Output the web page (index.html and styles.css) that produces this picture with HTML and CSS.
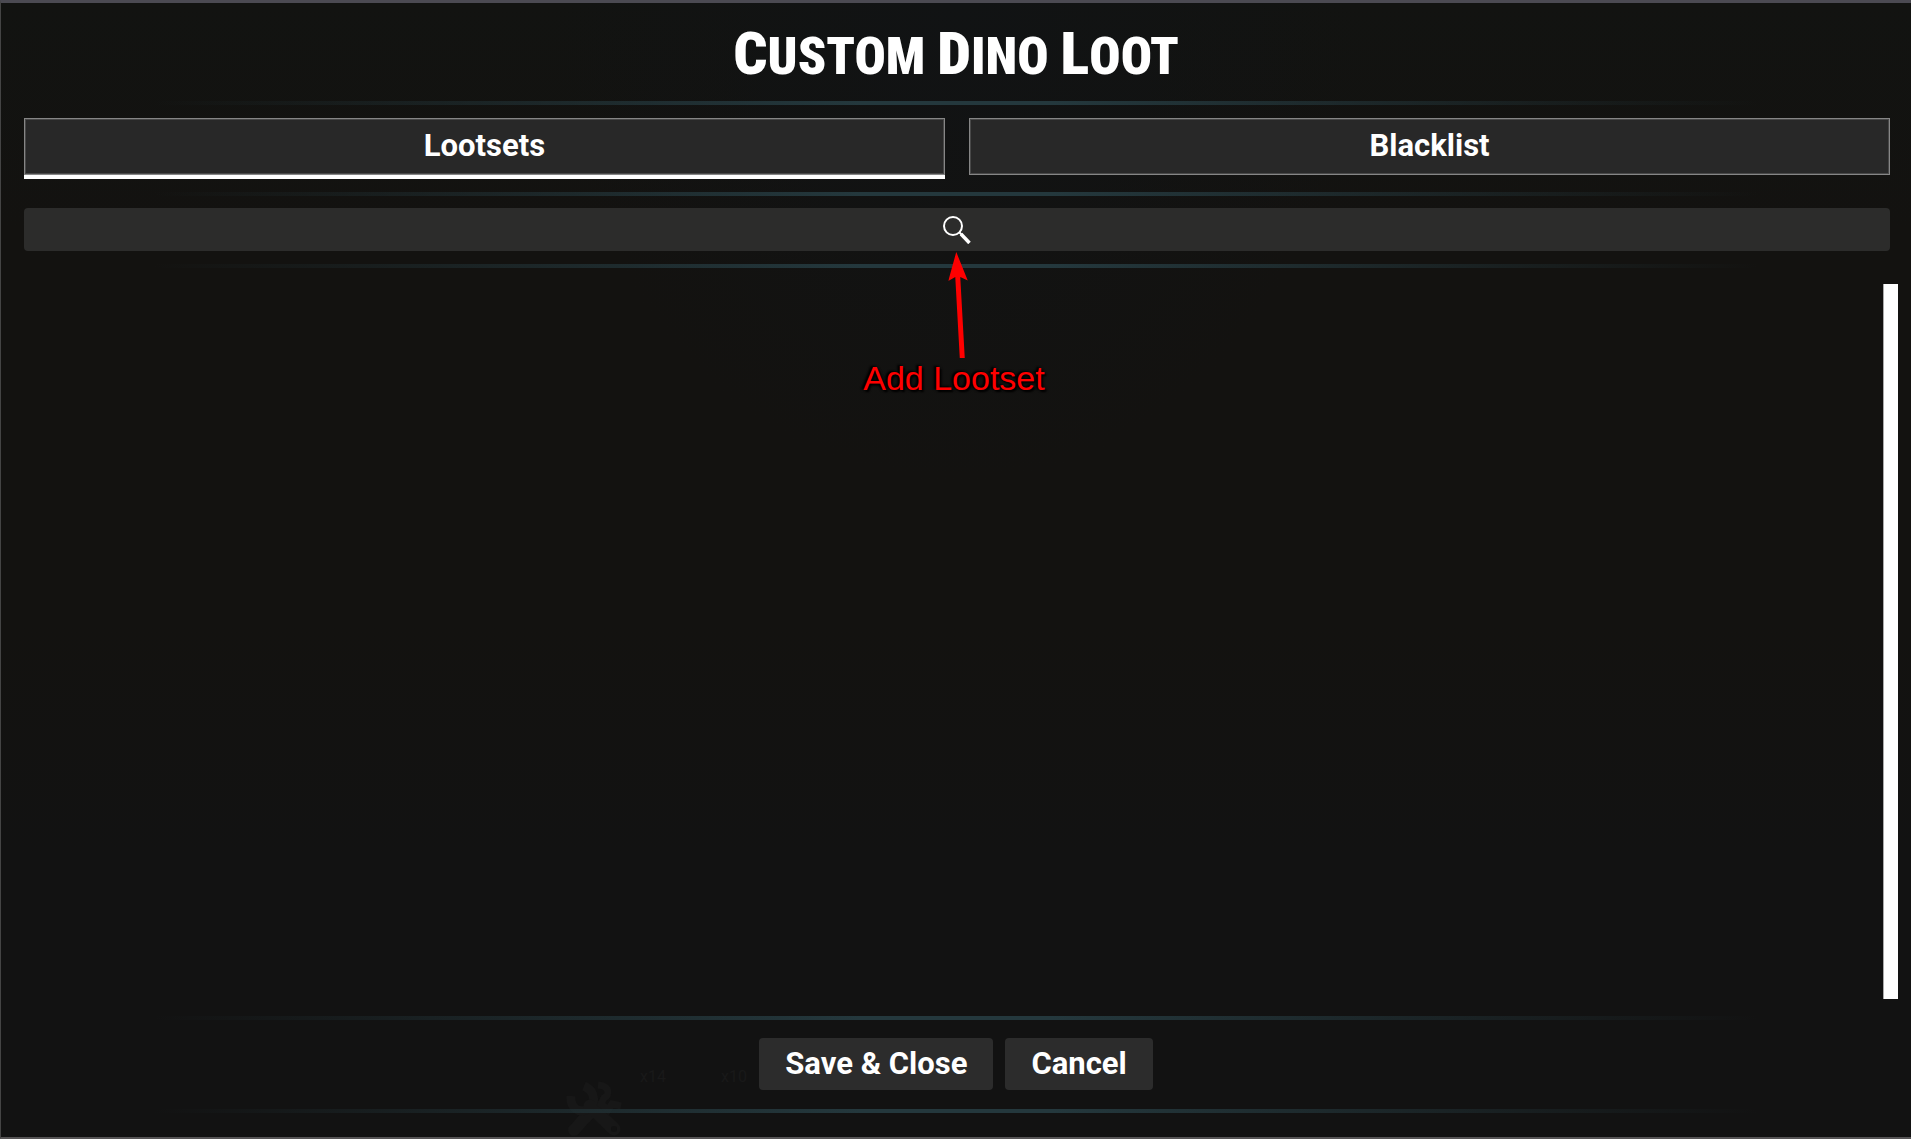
FILE: index.html
```
<!DOCTYPE html>
<html lang="en">
<head>
    <meta charset="UTF-8">
    <meta name="viewport" content="width=device-width, initial-scale=1.0">
    <title>Custom Dino Loot</title>
    <link rel="stylesheet" href="styles.css">
</head>

<body>

    <main class="window">
        <!-- Game HUD showing faintly through the window -->
        <div class="hud" aria-hidden="true">
            <svg class="hud-tools" width="58" height="56" viewBox="0 0 58 56" fill="none" stroke="#171717">
                <path d="M8 49L30 25" stroke-width="12" stroke-linecap="round"/>
                <path d="M5 15C4 27 13 33 22 28C30 24 30 10 18 5" stroke-width="9"/>
                <path d="M24 25L48 48" stroke-width="13" stroke-linecap="round"/>
                <circle cx="48" cy="48" r="3" fill="#121212" stroke="none"/>
                <path d="M32 4C44 5 44 14 38 17L35 23L42 29L46 23L55 25" stroke-width="7"/>
            </svg>
            <span class="hud-count">x14</span>
            <span class="hud-count">x10</span>
        </div>

        <h1><span class="cap">C</span>ustom <span class="cap">D</span>ino <span class="cap">L</span>oot</h1>
        <div class="divider"></div>

        <!-- Tabs -->
        <nav class="tabs">
            <button class="tab active" type="button">Lootsets</button>
            <button class="tab" type="button">Blacklist</button>
        </nav>
        <div class="divider"></div>

        <!-- Add lootset -->
        <div class="search-row">
            <button class="search-button" type="button" aria-label="Add Lootset">
                <svg class="search-icon" width="28" height="28" viewBox="0 0 28 28" aria-hidden="true">
                    <circle cx="10" cy="10" r="9" fill="none" stroke="#fff" stroke-width="2"/>
                    <path d="M16 16L19 19" stroke="#fff" stroke-width="2"/>
                    <path d="M18 18L26.500 27" stroke="#fff" stroke-width="3.500"/>
                </svg>
            </button>
            <div class="hint">
                <svg class="arrow" width="20" height="107" viewBox="0 0 20 107" aria-hidden="true">
                    <path d="M8 0L19.500 28.500L12 25L16.500 106H11.500L7 25L0 29Z" fill="#f00"/>
                </svg>
                <span class="hint-text">Add Lootset</span>
            </div>
        </div>
        <div class="divider"></div>

        <section class="list">
            <div class="scrollbar"></div>
        </section>
        <div class="divider"></div>

        <!-- Buttons -->
        <footer class="actions">
            <button class="action" type="button">Save &amp; Close</button>
            <button class="action" type="button">Cancel</button>
        </footer>
        <div class="divider"></div>
    </main>

</body>

</html>
```
FILE: styles.css
```
/* General Styles */
* {
    box-sizing: border-box;
}

body {
    margin: 0;
    background: #121212;
    color: #fff;
    font-family: Roboto, sans-serif;
}

button {
    color: #fff;
    font-family: inherit;
    font-size: 31px;
    font-weight: bold;
    line-height: 36px;
    cursor: pointer;
}

.window {
    position: relative;
    isolation: isolate;
    display: flex;
    flex-direction: column;
    min-height: 100vh;
    padding-bottom: 24px;
    border-top: 3px solid #4b4a52;
    border-left: 1px solid #444;
    border-bottom: 2px solid #565455;
    background: radial-gradient(ellipse at 50% 0, #111314, rgba(17, 19, 20, 0) 30%), linear-gradient(#121311, #131210 20%, #131210 55%, #121212 75%);
}

h1 {
    margin: 0;
    padding-top: 10px;
    font-family: "Roboto Condensed", "Liberation Sans Narrow", "Liberation Sans", sans-serif;
    font-size: 52px;
    font-weight: 900;
    line-height: 88px;
    text-align: center;
    text-transform: uppercase;
}

.cap {
    font-size: 60px;
    line-height: 60px;
}

.divider {
    height: 4px;
    flex-shrink: 0;
    background: linear-gradient(90deg, rgba(36, 56, 61, 0) 8%, #24383d 45%, #24383d 55%, rgba(36, 56, 61, 0) 92%);
}

/* Tabs */
.tabs {
    display: grid;
    grid-template-columns: 1fr 1fr;
    gap: 24px;
    padding: 13px 21px 17px 23px;
}

.tab {
    height: 57px;
    padding: 0 0 2px;
    border: 1px solid #868686;
    background: #282828;
    box-shadow: inset 0 0 0 1px #484848;
}

.tab.active {
    box-shadow: inset 0 0 0 1px #484848, 0 4px #fff;
}

/* Search bar */
.search-row {
    position: relative;
    padding: 12px 21px 13px 23px;
}

.search-button {
    display: flex;
    justify-content: center;
    align-items: center;
    width: 100%;
    height: 43px;
    padding: 0;
    border: none;
    border-radius: 4px;
    background: #2c2c2b;
}

.hint {
    position: absolute;
    z-index: 1;
    top: 56px;
    left: 50%;
    display: flex;
    flex-direction: column;
    align-items: center;
    margin-left: -2px;
    transform: translateX(-50%);
}

.arrow {
    margin-left: 8px;
}

.hint-text {
    color: #f00;
    font-family: "Liberation Sans", sans-serif;
    font-size: 34px;
    line-height: 38px;
    white-space: nowrap;
    text-shadow: 0 0 3px #000, 2px 2px 2px #000, -2px -1px 2px #000;
}

/* Lootset list */
.list {
    display: flex;
    flex: 1;
    justify-content: flex-end;
    padding: 16px 13px 17px 23px;
}

.scrollbar {
    width: 15px;
    background: #fff;
    border-left: 1px solid #aaa;
}

/* Footer */
.actions {
    display: flex;
    justify-content: center;
    gap: 12px;
    padding: 18px 0 19px;
}

.action {
    height: 52px;
    padding: 0 26px;
    border: none;
    border-radius: 4px;
    background: #2c2c2c;
}

/* Background HUD */
.hud {
    position: absolute;
    z-index: -1;
    bottom: 0;
    left: 565px;
    display: flex;
    align-items: flex-start;
    gap: 16px;
    height: 69px;
}

.hud-tools {
    margin-top: 13px;
}

.hud-count {
    width: 65px;
    color: #191919;
    font-size: 16px;
    line-height: 18px;
}
```
